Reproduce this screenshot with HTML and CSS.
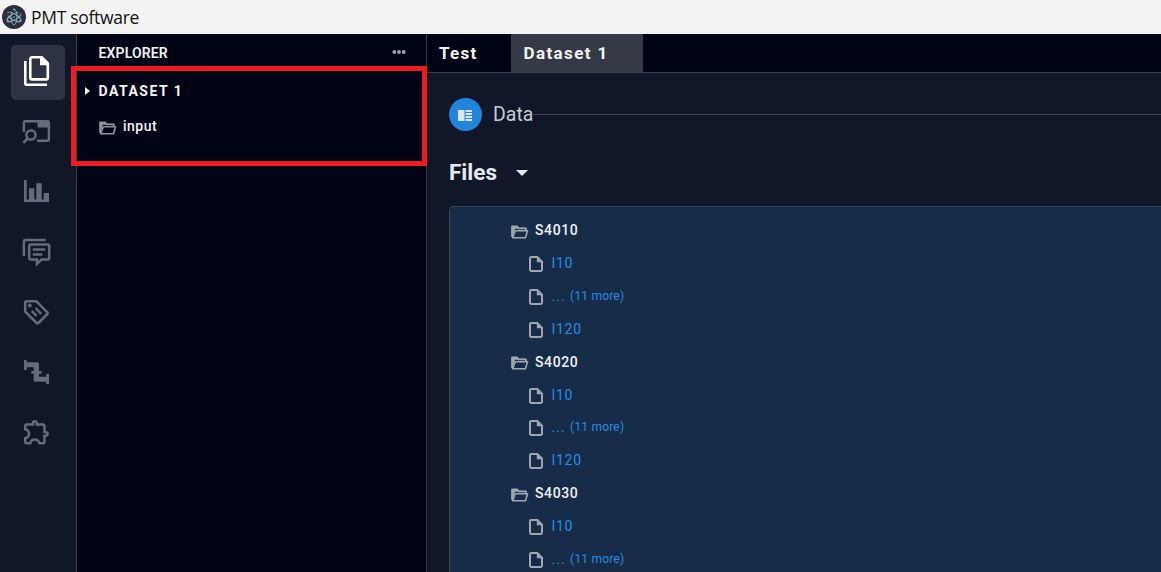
FILE: index.html
```html
<!DOCTYPE html>
<html lang="en">
<head>
<meta charset="utf-8">
<title>PMT software</title>
<link rel="stylesheet" href="styles.css">
</head>
<body>
<svg class="defs" width="0" height="0" aria-hidden="true">
  <symbol id="folder" viewBox="0 0 18 14">
    <path d="M1.100 12V1.500h5.200l1.300 1.900h7.300v2" fill="none" stroke="currentColor" stroke-width="1.800" stroke-linejoin="round"/>
    <path d="M4.300 5.700h12.200l-2 7H1.600z" fill="none" stroke="currentColor" stroke-width="1.600" stroke-linejoin="round"/>
    <path d="M.6 1h5.700l1.400 1.800h7v1H4L1.800 11H.6z" fill="currentColor"/>
  </symbol>
  <symbol id="file" viewBox="0 0 14 16">
    <path d="M2.200 1h6.100L13 5.700v8.100a1.200 1.200 0 0 1-1.200 1.200H2.200A1.200 1.200 0 0 1 1 13.800V2.200A1.200 1.200 0 0 1 2.200 1z" fill="none" stroke="currentColor" stroke-width="2"/>
    <path d="M7.800 1v5.200H13z" fill="currentColor"/>
  </symbol>
</svg>
<header class="titlebar">
  <svg class="logo" viewBox="0 0 24 24">
    <circle cx="12" cy="12" r="12" fill="#2c2e3b"/>
    <g fill="none" stroke="#86b9c4" stroke-width=".9">
      <ellipse cx="12" cy="12" rx="7.800" ry="3" transform="rotate(30 12 12)" stroke-dasharray="15 3 20"/>
      <ellipse cx="12" cy="12" rx="7.800" ry="3" transform="rotate(90 12 12)" stroke-dasharray="14 3 20"/>
      <ellipse cx="12" cy="12" rx="7.800" ry="3" transform="rotate(150 12 12)" stroke-dasharray="15 3 20"/>
    </g>
    <g fill="#86b9c4"><circle cx="12" cy="12" r=".8"/><circle cx="5.800" cy="16" r="1.100"/><circle cx="18.400" cy="16" r="1.100"/><circle cx="12" cy="4.400" r=".9"/></g>
  </svg>
  <span class="app-name">PMT software</span>
</header>
<div class="workspace">
  <nav class="activity">
    <a class="tool active"><svg viewBox="0 0 54 55"><g fill="none" stroke="currentColor" stroke-width="2.600"><path d="M14.300 16v22.200a1.500 1.500 0 0 0 1.500 1.500H36"/><path d="M21 12.300h9.800l6 6v14.400a1.700 1.700 0 0 1-1.700 1.700H21a1.700 1.700 0 0 1-1.700-1.700V14a1.700 1.700 0 0 1 1.700-1.700z"/></g><path d="M29 11.500v8.700h8.700z" fill="currentColor"/></svg></a>
    <a class="tool"><svg viewBox="0 0 54 55"><path d="M12.900 27V17.700a1.500 1.500 0 0 1 1.500-1.500h22a1.500 1.500 0 0 1 1.500 1.500v16.600a1.500 1.500 0 0 1-1.500 1.500H26" fill="none" stroke="currentColor" stroke-width="2.400"/><path d="M26.500 15.500H38v7H26.500z" fill="currentColor"/><circle cx="20" cy="30" r="4.600" fill="none" stroke="currentColor" stroke-width="2.500"/><path d="M16.600 33.500l-4.300 4.400" stroke="currentColor" stroke-width="2.600"/></svg></a>
    <a class="tool"><svg viewBox="0 0 54 55"><path d="M13 15h2.700v19.500H18V23.300h5.300v11.200h2V18.300h5.400v16.200h2V28H38v9H13z" fill="currentColor"/></svg></a>
    <a class="tool"><svg viewBox="0 0 54 55"><g fill="none" stroke="currentColor" stroke-width="2.500"><path d="M12.900 31V16.400a1.500 1.500 0 0 1 1.500-1.500h20.300"/><path d="M19.700 19.500h17a1.500 1.500 0 0 1 1.500 1.500v12a1.500 1.500 0 0 1-1.500 1.500h-6.200L26 38.800v-4.300h-6.300a1.500 1.500 0 0 1-1.500-1.500V21a1.500 1.500 0 0 1 1.500-1.500z"/><path d="M21.700 24.400h12.600M21.700 29.400h9.600"/></g></svg></a>
    <a class="tool"><svg viewBox="0 0 54 55"><g fill="none" stroke="currentColor" stroke-width="2.500"><path d="M15.700 16.200h9.500L36.300 27.300a1.200 1.200 0 0 1 0 1.700l-9 9a1.200 1.200 0 0 1-1.700 0L14.200 26.600v-8.900a1.500 1.500 0 0 1 1.500-1.500z" stroke-linejoin="round"/><path d="M20.800 26.200l4.700 4.700M24.600 23.200l5.600 5.600"/></g><circle cx="18.800" cy="20.500" r="1.900" fill="currentColor"/></svg></a>
    <a class="tool"><svg viewBox="0 0 54 55"><path d="M13 15h2.700v2.300h10.600a1.700 1.700 0 0 1 1.700 1.700v7h2.700v2.700H28v3h7.300V29H38v10h-2.700v-2.300h-11a1.700 1.700 0 0 1-1.700-1.700v-6.300h-2.300V26h2.300v-3.700h-6.900V25H13z" fill="currentColor"/></svg></a>
    <a class="tool"><svg viewBox="0 0 54 55"><path transform="translate(10.400 11.900) scale(1.280 1.250)" fill="currentColor" d="M10.500 4.500c.28 0 .5.22.5.5v2h6v6h2c.28 0 .5.22.5.5s-.22.5-.5.5h-2v6h-2.120c-.68-1.750-2.390-3-4.380-3s-3.700 1.250-4.380 3H4v-2.120c1.750-.68 3-2.390 3-4.380 0-1.990-1.240-3.700-2.990-4.380L4 7h6V5c0-.28.22-.5.5-.5m0-2C9.120 2.500 8 3.620 8 5H4c-1.100 0-1.990.9-1.990 2v3.800h.29c1.490 0 2.700 1.210 2.700 2.700s-1.210 2.700-2.700 2.700H2V20c0 1.100.9 2 2 2h3.800v-.3c0-1.490 1.210-2.700 2.700-2.700s2.700 1.210 2.700 2.700v.3H17c1.100 0 2-.9 2-2v-4c1.380 0 2.500-1.120 2.500-2.500S20.380 11 19 11V7c0-1.100-.9-2-2-2h-4c0-1.380-1.120-2.500-2.500-2.500z"/></svg></a>
  </nav>
  <aside class="explorer">
    <div class="explorer-head"><span class="explorer-title">EXPLORER</span>
      <svg class="dots" viewBox="0 0 14 4"><g fill="currentColor"><circle cx="2.300" cy="2" r="1.900"/><circle cx="7" cy="2" r="1.900"/><circle cx="11.700" cy="2" r="1.900"/></g></svg></div>
    <section class="dataset">
      <div class="dataset-name"><svg class="caret" viewBox="0 0 5 8"><path d="M0 0l5 4-5 4z" fill="currentColor"/></svg><span>DATASET 1</span></div>
      <div class="dataset-item"><svg class="folder"><use href="#folder"/></svg><span>input</span></div>
    </section>
  </aside>
  <main class="main">
    <div class="tabs"><div class="tab first">Test</div><div class="tab current">Dataset 1</div></div>
    <div class="content">
      <div class="section-head">
        <span class="badge"><svg viewBox="0 0 14 11"><path d="M0 0h6.500v11H0zM7.500 0H14v2H7.500zM7.500 3H14v2H7.500zM7.500 6H14v2H7.500zM7.500 9H14v2H7.500z" fill="#dfe4ea"/></svg></span>
        <span class="section-name">Data</span><i class="rule"></i>
      </div>
      <h2 class="files-title"><span>Files</span><svg viewBox="0 0 12 6"><path d="M0 0h12L6 6z" fill="currentColor"/></svg></h2>
      <div class="tree">
        <div class="row dir"><svg class="folder"><use href="#folder"/></svg><span>S4010</span></div>
        <div class="row leaf"><svg class="file"><use href="#file"/></svg><span>I10</span></div>
        <div class="row leaf"><svg class="file"><use href="#file"/></svg><span class="ellipsis">...</span><span class="more">(11 more)</span></div>
        <div class="row leaf"><svg class="file"><use href="#file"/></svg><span>I120</span></div>
        <div class="row dir"><svg class="folder"><use href="#folder"/></svg><span>S4020</span></div>
        <div class="row leaf"><svg class="file"><use href="#file"/></svg><span>I10</span></div>
        <div class="row leaf"><svg class="file"><use href="#file"/></svg><span class="ellipsis">...</span><span class="more">(11 more)</span></div>
        <div class="row leaf"><svg class="file"><use href="#file"/></svg><span>I120</span></div>
        <div class="row dir"><svg class="folder"><use href="#folder"/></svg><span>S4030</span></div>
        <div class="row leaf"><svg class="file"><use href="#file"/></svg><span>I10</span></div>
        <div class="row leaf last"><svg class="file"><use href="#file"/></svg><span class="ellipsis">...</span><span class="more">(11 more)</span></div>
      </div>
    </div>
  </main>
</div>
</body>
</html>
```
FILE: styles.css
```css
* { box-sizing: border-box; }
body {
  margin: 0;
  height: 572px;
  overflow: hidden;
  display: flex;
  flex-direction: column;
  background: #0f1729;
  color: #f2f3f5;
  font-family: Roboto, sans-serif;
}
svg { display: block; flex: none; }
.defs { position: absolute; }
.titlebar {
  flex: none;
  height: 34px;
  display: flex;
  align-items: center;
  gap: 5px;
  padding-left: 2px;
  background: #f3f3f3;
  color: #111;
}
.logo { width: 24px; height: 24px; }
.app-name { font: 17.500px/24px "Open Sans", sans-serif; letter-spacing: -0.300px; white-space: nowrap; }
.workspace { flex: 1; min-height: 0; display: flex; }
.activity {
  flex: none;
  width: 77px;
  padding: 11px 0 0 11px;
  display: flex;
  flex-direction: column;
  gap: 5px;
  border-right: 1px solid #3b414e;
  color: #666b79;
}
.tool { width: 54px; height: 55px; border-radius: 5px; }
.tool svg { width: 54px; height: 55px; }
.tool.active { background: #2d3345; color: #fff; }
.explorer {
  flex: none;
  width: 350px;
  background: #010414;
  border-right: 1px solid #343843;
}
.explorer-head {
  height: 32px;
  padding: 4px 20px 0 21px;
  display: flex;
  align-items: center;
  justify-content: space-between;
}
.explorer-title { padding: 2px 0 0 0.500px; font-size: 14px; font-weight: 600; line-height: 30px; letter-spacing: 0.150px; }
.dots { width: 14px; height: 4px; color: #a3a5ac; }
.dataset {
  position: relative;
  width: 356px;
  height: 100px;
  margin-left: -6px;
  border: 5px solid #ed1c24;
  padding: 10px 0 0 9px;
}
.dataset-name {
  height: 20px;
  display: flex;
  align-items: center;
  gap: 8.500px;
  font-size: 14px;
  font-weight: 700;
  letter-spacing: 1.500px;
}
.caret { width: 5px; height: 8px; }
.dataset-item {
  height: 20px;
  margin: 15px 0 0 14px;
  display: flex;
  align-items: center;
  gap: 6px;
  font-size: 14px;
  font-weight: 500;
  letter-spacing: 0.500px;
}
.folder { width: 18px; height: 14px; margin-top: 3px; color: #a0a7b1; }
.dataset-item .folder { color: #8f929b; }
.main { flex: 1; min-width: 0; display: flex; flex-direction: column; }
.tabs {
  flex: none;
  height: 39px;
  display: flex;
  background: #010414;
  border-bottom: 1px solid #343a47;
}
.tab {
  width: 84px;
  padding-left: 12px;
  font-size: 17px;
  font-weight: 700;
  line-height: 39px;
  letter-spacing: 1.300px;
}
.tab.current { width: 132px; padding-left: 12.500px; background: #353945; letter-spacing: 1.400px; }
.content { flex: 1; min-height: 0; padding: 25px 0 0 22px; display: flex; flex-direction: column; }
.section-head { flex: none; height: 33px; display: flex; align-items: center; }
.badge {
  width: 33px;
  height: 33px;
  padding: 12px 0 0 9px;
  border-radius: 50%;
  background: #2185dc;
}
.badge svg { width: 14px; height: 11px; }
.section-name { margin-left: 11px; font-size: 19.500px; color: #c7cacf; }
.rule { flex: 1; height: 1px; background: #3a414f; }
.files-title {
  flex: none;
  height: 26px;
  margin: 28px 0 0;
  display: flex;
  align-items: center;
  gap: 19px;
  font-size: 22.500px;
  font-weight: 700;
  color: #e6e8ea;
}
.files-title svg { width: 12px; height: 6px; margin-top: 2px; }
.tree {
  flex: 1;
  min-height: 0;
  margin-top: 21px;
  padding-top: 7px;
  border: solid #3c4657;
  border-width: 1px 0 0 1px;
  border-top-left-radius: 5px;
  background: #172c48;
}
.row { height: 32.850px; display: flex; align-items: center; font-size: 14px; }
.row.last { height: 29px; padding-top: 5px; }
.dir { padding-left: 61px; gap: 6px; font-weight: 500; letter-spacing: 0.600px; }
.leaf { padding-left: 79px; gap: 8.500px; color: #238ee8; letter-spacing: 0.700px; }
.file { width: 14px; height: 16px; margin-top: 2px; color: #a0a7b1; }
.ellipsis { letter-spacing: 1px; }
.more { margin-left: -4px; font-size: 12px; letter-spacing: 0.200px; }
```
